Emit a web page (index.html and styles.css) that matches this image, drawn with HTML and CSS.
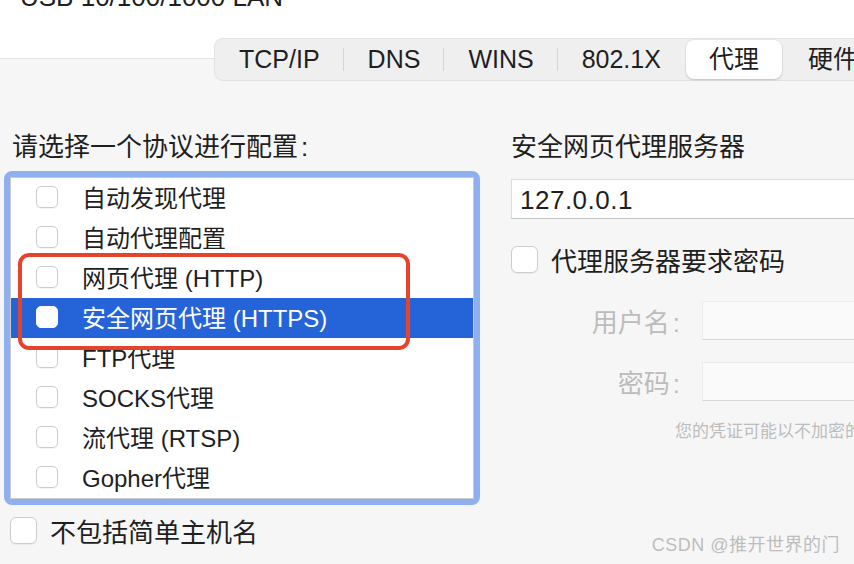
FILE: index.html
```html
<!DOCTYPE html>
<html lang="zh-CN">
<head>
<meta charset="utf-8">
<title>代理</title>
<link rel="stylesheet" href="styles.css">
</head>
<body>
<div class="page">
  <div class="title">USB 10/100/1000 LAN</div>
  <div class="tabs">
    <div class="tab">TCP/IP</div><span class="sep"></span>
    <div class="tab">DNS</div><span class="sep"></span>
    <div class="tab">WINS</div><span class="sep"></span>
    <div class="tab">802.1X</div>
    <div class="tab active">代理</div>
    <div class="tab">硬件</div>
  </div>
  <div class="content">
    <div class="left">
      <div class="label">请选择一个协议进行配置<span class="colon">:</span></div>
      <div class="listbox">
        <div class="list">
          <div class="row"><span class="cb"></span>自动发现代理</div>
          <div class="row"><span class="cb"></span>自动代理配置</div>
          <div class="row"><span class="cb"></span>网页代理 (HTTP)</div>
          <div class="row sel"><span class="cb"></span>安全网页代理 (HTTPS)</div>
          <div class="row"><span class="cb"></span>FTP代理</div>
          <div class="row"><span class="cb"></span>SOCKS代理</div>
          <div class="row"><span class="cb"></span>流代理 (RTSP)</div>
          <div class="row"><span class="cb"></span>Gopher代理</div>
        </div>
      </div>
      <div class="check"><span class="cb lg"></span>不包括简单主机名</div>
    </div>
    <div class="right">
      <div class="label">安全网页代理服务器</div>
      <div class="field">127.0.0.1</div>
      <div class="check"><span class="cb lg"></span>代理服务器要求密码</div>
      <div class="cred">
        <div class="dlabel">用户名<span class="colon">:</span></div>
        <div class="dinput"></div>
        <div class="dlabel">密码<span class="colon">:</span></div>
        <div class="dinput"></div>
      </div>
      <div class="note">您的凭证可能以不加密的形式发送</div>
    </div>
  </div>
  <div class="mark"></div>
  <div class="wm">CSDN @推开世界的门</div>
</div>
</body>
</html>
```
FILE: styles.css
```css
* { box-sizing: border-box; }
html, body { margin: 0; }
body {
  width: 854px;
  height: 564px;
  overflow: hidden;
  font-family: "Liberation Sans", "Noto Sans CJK SC", sans-serif;
  color: #1f1f1f;
  background: linear-gradient(#ffffff 0, #ffffff 58px, #e4e4e4 58px, #e4e4e4 59px, #f6f6f6 59px);
}
.page {
  position: relative;
  display: flex;
  flex-direction: column;
  height: 564px;
  overflow: hidden;
}
.title {
  font-size: 26px;
  line-height: 26px;
  height: 26px;
  margin: -16px 0 0 20px;
  white-space: nowrap;
  flex: none;
}
.tabs {
  display: flex;
  align-items: center;
  flex: none;
  width: 700px;
  height: 43px;
  margin: 28px 0 0 214px;
  border: 1px solid #e2e2e2;
  border-right: 0;
  border-radius: 9px 0 0 9px;
  background: #efefef;
  font-size: 25px;
  white-space: nowrap;
}
.tab {
  flex: none;
  height: 39px;
  line-height: 39px;
  padding: 0 23px 0 24px;
}
.sep {
  flex: none;
  width: 1px;
  height: 23px;
  background: #d5d5d5;
}
.tab.active {
  background: #ffffff;
  border-radius: 8px;
  margin: 0 2px;
  padding: 0 23px;
  box-shadow: 0 1px 2px rgba(0, 0, 0, 0.18), 0 0 0 0.5px rgba(0, 0, 0, 0.06);
}
.content {
  display: flex;
  align-items: flex-start;
  margin-top: 48px;
}
.left {
  flex: none;
  width: 480px;
  padding-left: 4px;
}
.label {
  font-size: 26px;
  line-height: 36px;
  white-space: nowrap;
}
.colon { margin-left: 3px; }
.left > .label { margin-left: 8px; }
.listbox {
  margin-top: 6px;
  width: 476px;
  border: 6px solid #8fb0ef;
  border-radius: 8px;
}
.list {
  border: 1px solid #cbcbcb;
  background: #ffffff;
}
.row {
  display: flex;
  align-items: center;
  height: 40px;
  padding: 0 0 3px 25px;
  font-size: 24px;
  white-space: nowrap;
}
.row .cb { margin-right: 24px; }
.row.sel { background: #2563d9; color: #ffffff; }
.row.sel .cb { border-color: #ffffff; box-shadow: none; }
.cb {
  flex: none;
  width: 22px;
  height: 22px;
  border: 1px solid #cdcdcd;
  border-radius: 5px;
  background: #ffffff;
  box-shadow: 0 1px 1px rgba(0, 0, 0, 0.05);
}
.cb.lg {
  width: 27px;
  height: 27px;
  border-radius: 6px;
  margin-right: 13px;
}
.check {
  display: flex;
  align-items: center;
  height: 36px;
  font-size: 26px;
  white-space: nowrap;
}
.left > .check { margin-top: 7px; padding-left: 6px; }
.right {
  flex: none;
  width: 420px;
  margin-left: 31px;
}
.field {
  margin-top: 14px;
  height: 40px;
  padding: 1px 0 0 8px;
  background: #ffffff;
  border: 1px solid #dcdcdc;
  border-bottom-color: #c4c4c4;
  font-size: 26px;
  line-height: 38px;
  letter-spacing: 0.5px;
}
.right > .check { margin-top: 22px; }
.cred {
  display: grid;
  grid-template-columns: 169px 1fr;
  column-gap: 22px;
  row-gap: 22px;
  align-items: center;
  margin-top: 24px;
}
.dlabel {
  text-align: right;
  font-size: 26px;
  color: #bcbcbc;
  white-space: nowrap;
}
.dinput {
  height: 39px;
  background: #fafafa;
  border: 1px solid #ececec;
  border-bottom-color: #d7d7d7;
}
.note {
  margin: 19px 0 0 164px;
  font-size: 17px;
  line-height: 24px;
  color: #bdbdbd;
  white-space: nowrap;
}
.mark {
  position: absolute;
  left: 18px;
  top: 253px;
  width: 392px;
  height: 97px;
  border: 4px solid #e6432c;
  border-radius: 11px;
}
.wm {
  position: absolute;
  right: 14px;
  top: 533px;
  font-size: 18px;
  line-height: 24px;
  letter-spacing: 0.5px;
  color: #bdbdbd;
  white-space: nowrap;
}
```
